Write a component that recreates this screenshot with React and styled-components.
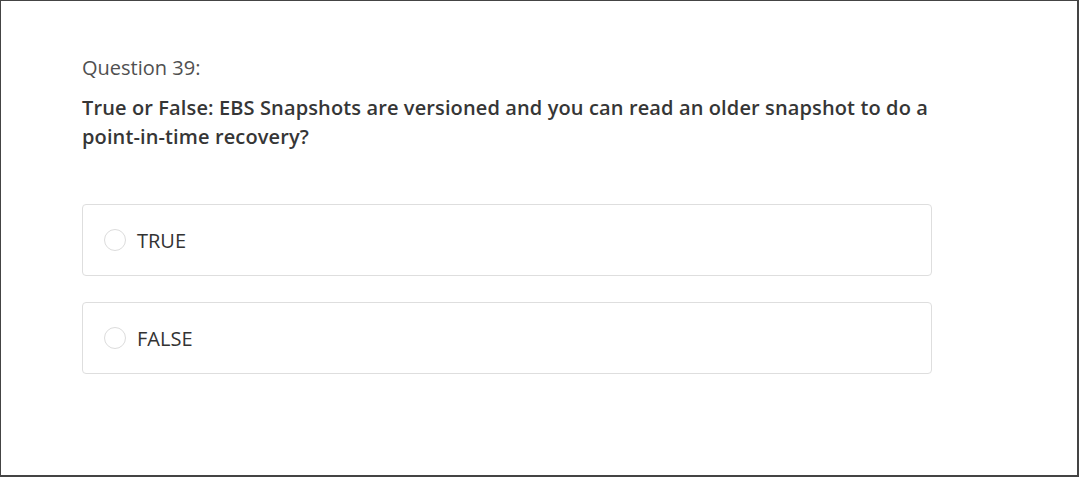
import React from 'react'
import styled, { createGlobalStyle } from "styled-components";

const Global = createGlobalStyle`
  html, body { margin: 0; padding: 0; background: #fff; }
  body { font-family: "Open Sans", "Liberation Sans", sans-serif; }
`;

const options = ["TRUE", "FALSE"];

export default function App() {
  return (
    <>
      <Global />
      <Frame>
        <Label>Question 39:</Label>
        <Prompt>
          True or False: EBS Snapshots are versioned and you can read an older snapshot to do a
          point-in-time recovery?
        </Prompt>
        <Options>
          {options.map((o) => (
            <Option key={o}>
              <Radio />
              <OptionText>{o}</OptionText>
            </Option>
          ))}
        </Options>
      </Frame>
    </>
  );
}

const Frame = styled.div`
  box-sizing: border-box;
  width: 1079px;
  height: 477px;
  border: 1px solid #444;
  border-right-width: 2px;
  border-bottom-width: 2px;
  padding: 52px 0 0 81px;
`;

const Label = styled.div`
  font-size: 20px;
  line-height: 29px;
  color: #505050;
`;

const Prompt = styled.div`
  width: 870px;
  margin-top: 11px;
  font-size: 20px;
  font-weight: 600;
  line-height: 29px;
  letter-spacing: 0.12px;
  color: #363636;
`;

const Options = styled.div`
  display: flex;
  flex-direction: column;
  gap: 26px;
  margin-top: 53px;
  width: 850px;
`;

const Option = styled.div`
  box-sizing: border-box;
  height: 72px;
  display: flex;
  align-items: center;
  padding-left: 21px;
  border: 1px solid #dedede;
  border-radius: 4px;
`;

const Radio = styled.span`
  box-sizing: border-box;
  width: 22px;
  height: 22px;
  border-radius: 50%;
  border: 1px solid #dcdcdc;
  margin-right: 11px;
`;

const OptionText = styled.span`
  font-size: 20px;
  color: #333;
`;
